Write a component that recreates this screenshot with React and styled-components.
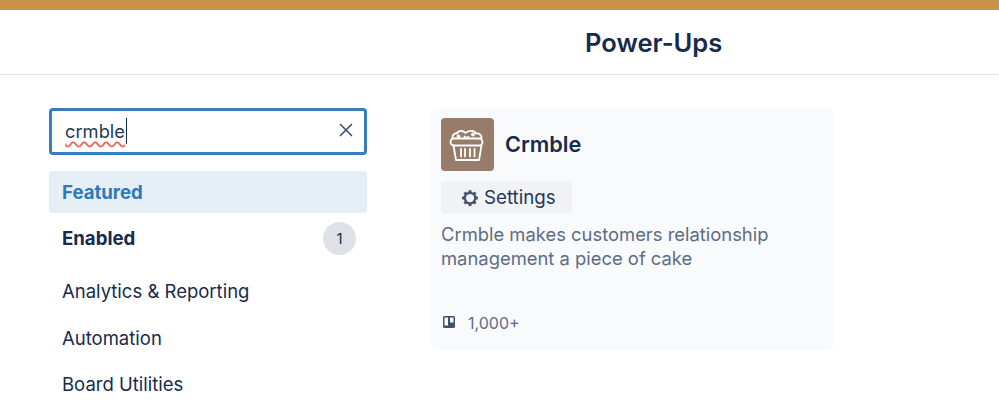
import styled, { createGlobalStyle } from 'styled-components';
import { X } from 'lucide-react';

const GlobalStyle = createGlobalStyle`
  html, body {
    margin: 0;
    background: #fff;
    overflow: hidden;
  }
  body {
    font-family: Inter, "Noto Sans", sans-serif;
    color: #172b4d;
  }
`;

const Page = styled.div`
  width: 999px;
  height: 413px;
  overflow: hidden;
`;

const TopBar = styled.div`
  height: 10px;
  background: #c99248;
`;

const Header = styled.header`
  height: 64px;
  padding-left: 585px;
  display: flex;
  align-items: center;
  border-bottom: 1px solid #dfe1e6;
`;

const Heading = styled.h1`
  margin: 2px 0 0;
  font-size: 25.5px;
  line-height: 32px;
  font-weight: 600;
  color: #172b4d;
`;

const Body = styled.main`
  display: flex;
  align-items: flex-start;
  gap: 64px;
  padding: 33px 0 0 49px;
`;

const Sidebar = styled.aside`
  width: 318px;
  flex: none;
`;

const SearchBox = styled.div`
  box-sizing: border-box;
  height: 47px;
  border: 3px solid #3a7dbf;
  border-radius: 4px;
  display: flex;
  align-items: center;
  justify-content: space-between;
  padding: 0 7px 0 13px;
  margin-bottom: 16px;
`;

const SearchText = styled.span`
  font-size: 18.3px;
  line-height: 26px;
  margin-top: -2px;
  color: #253858;
  border-right: 1px solid #172b4d;
  padding-right: 1px;
  text-decoration: underline wavy #ec6a5c 1.5px;
  text-underline-offset: 3px;
`;

const ClearIcon = styled(X)`
  color: #42526e;
  width: 22px;
  height: 22px;
  margin-top: -3px;
`;

const NavItem = styled.div`
  box-sizing: border-box;
  height: ${props => props.$height}px;
  display: flex;
  align-items: center;
  justify-content: space-between;
  padding: 0 11px 0 13px;
  border-radius: 4px;
  font-size: ${props => (props.$active || props.$bold ? 18.6 : 18.5)}px;
  font-weight: ${props => (props.$active || props.$bold ? 700 : 400)};
  color: ${props => (props.$active ? '#2f78ba' : '#172b4d')};
  background: ${props => (props.$active ? '#e6eff6' : 'transparent')};
`;

const Count = styled.span`
  width: 33px;
  height: 33px;
  border-radius: 50%;
  background: #dfe1e6;
  display: flex;
  align-items: center;
  justify-content: center;
  font-size: 15px;
  font-weight: 400;
  color: #172b4d;
`;

const Card = styled.article`
  box-sizing: border-box;
  width: 403px;
  height: 242px;
  background: #f9fafc;
  border-radius: 6px;
  padding: 10px;
  display: flex;
  flex-direction: column;
`;

const CardHead = styled.div`
  display: flex;
  align-items: center;
  gap: 11px;
  margin-bottom: 10px;
`;

const Logo = styled.div`
  width: 53px;
  height: 53px;
  border-radius: 4px;
  background: #977c69;
  display: flex;
  align-items: center;
  justify-content: center;
`;

const CardTitle = styled.h2`
  margin: -2px 0 0;
  font-size: 21.7px;
  font-weight: 600;
  color: #172b4d;
`;

const SettingsButton = styled.button`
  width: 131px;
  height: 33px;
  border: none;
  border-radius: 4px;
  background: #f1f2f5;
  display: flex;
  align-items: center;
  gap: 5px;
  padding: 0 0 0 20px;
  font-family: inherit;
  font-size: 18.7px;
  color: #253858;
`;

const Description = styled.p`
  margin: 9px 0 0;
  font-size: 18.4px;
  line-height: 23.5px;
  color: #5e6c84;
`;

const Stats = styled.div`
  margin-top: auto;
  padding: 0 0 5px 2px;
  display: flex;
  align-items: center;
  gap: 13px;
  font-size: 16px;
  line-height: 24px;
  color: #5e6c84;
`;

const BoardGlyph = styled.svg`
  margin-top: -2px;
`;

const CupcakeIcon = () => (
  <svg width="38" height="38" viewBox="0 0 38 38" fill="none" stroke="#fff" strokeWidth="1.8" strokeLinecap="round" strokeLinejoin="round">
    <path d="M3.5 12.5C3 9 5.5 7 8 7.5 9 4.5 14 4 16.5 7 19 4 26 4 27 7.5c3-.5 6 1.5 5.5 5" />
    <path d="M1.5 16c0-2 1.5-3.5 3-3.5h26c1.5 0 3 1.5 3 3.5s-1.5 3.5-3 3.5h-26c-1.5 0-3-1.5-3-3.5z" />
    <path d="M4.5 19.5L7 34h23l2.5-14.5" />
    <path d="M12 23v7.5M16 23v7.5M21 23v7.5M25.500 23v7.5" />
    <circle cx="9.5" cy="10.5" r="1" fill="#fff" />
    <circle cx="24" cy="8.5" r="1" fill="#fff" />
    <path d="M15.5 10.5c1 1.5 3 1.5 4 .2" />
  </svg>
);

const GearIcon = () => (
  <svg width="18" height="18" viewBox="0 0 24 24" fill="none" stroke="#42526e">
    <circle cx="12" cy="12" r="7" strokeWidth="3" />
    <path strokeWidth="4" d="M12 1.5v3M12 19.5v3M1.5 12h3M19.5 12h3M4.6 4.6l2.1 2.1M17.3 17.3l2.1 2.1M4.6 19.4l2.1-2.1M17.3 6.7l2.1-2.1" />
  </svg>
);

const BoardIcon = () => (
  <BoardGlyph width="12" height="12" viewBox="0 0 12 12">
    <path fill="#42526e" fillRule="evenodd" d="M1.5 0h9A1.5 1.5 0 0 1 12 1.5v9a1.5 1.5 0 0 1-1.5 1.5h-9A1.5 1.5 0 0 1 0 10.5v-9A1.5 1.5 0 0 1 1.5 0zM1.5 1.5V9.5H5V1.5zM7 1.5V6.5H10.5V1.5z" />
  </BoardGlyph>
);

const App = () => {
  return (
    <Page>
      <GlobalStyle />
      <TopBar />
      <Header>
        <Heading>Power-Ups</Heading>
      </Header>
      <Body>
        <Sidebar>
          <SearchBox>
            <SearchText>crmble</SearchText>
            <ClearIcon strokeWidth={1.8} />
          </SearchBox>
          <NavItem $active $height={42}>Featured</NavItem>
          <NavItem $bold $height={50}>
            Enabled
            <Count>1</Count>
          </NavItem>
          <NavItem $height={55}>Analytics &amp; Reporting</NavItem>
          <NavItem $height={39}>Automation</NavItem>
          <NavItem $height={53}>Board Utilities</NavItem>
        </Sidebar>
        <Card>
          <CardHead>
            <Logo>
              <CupcakeIcon />
            </Logo>
            <CardTitle>Crmble</CardTitle>
          </CardHead>
          <SettingsButton>
            <GearIcon />
            Settings
          </SettingsButton>
          <Description>
            Crmble makes customers relationship management a piece of cake
          </Description>
          <Stats>
            <BoardIcon />
            1,000+
          </Stats>
        </Card>
      </Body>
    </Page>
  );
};

export default App;
